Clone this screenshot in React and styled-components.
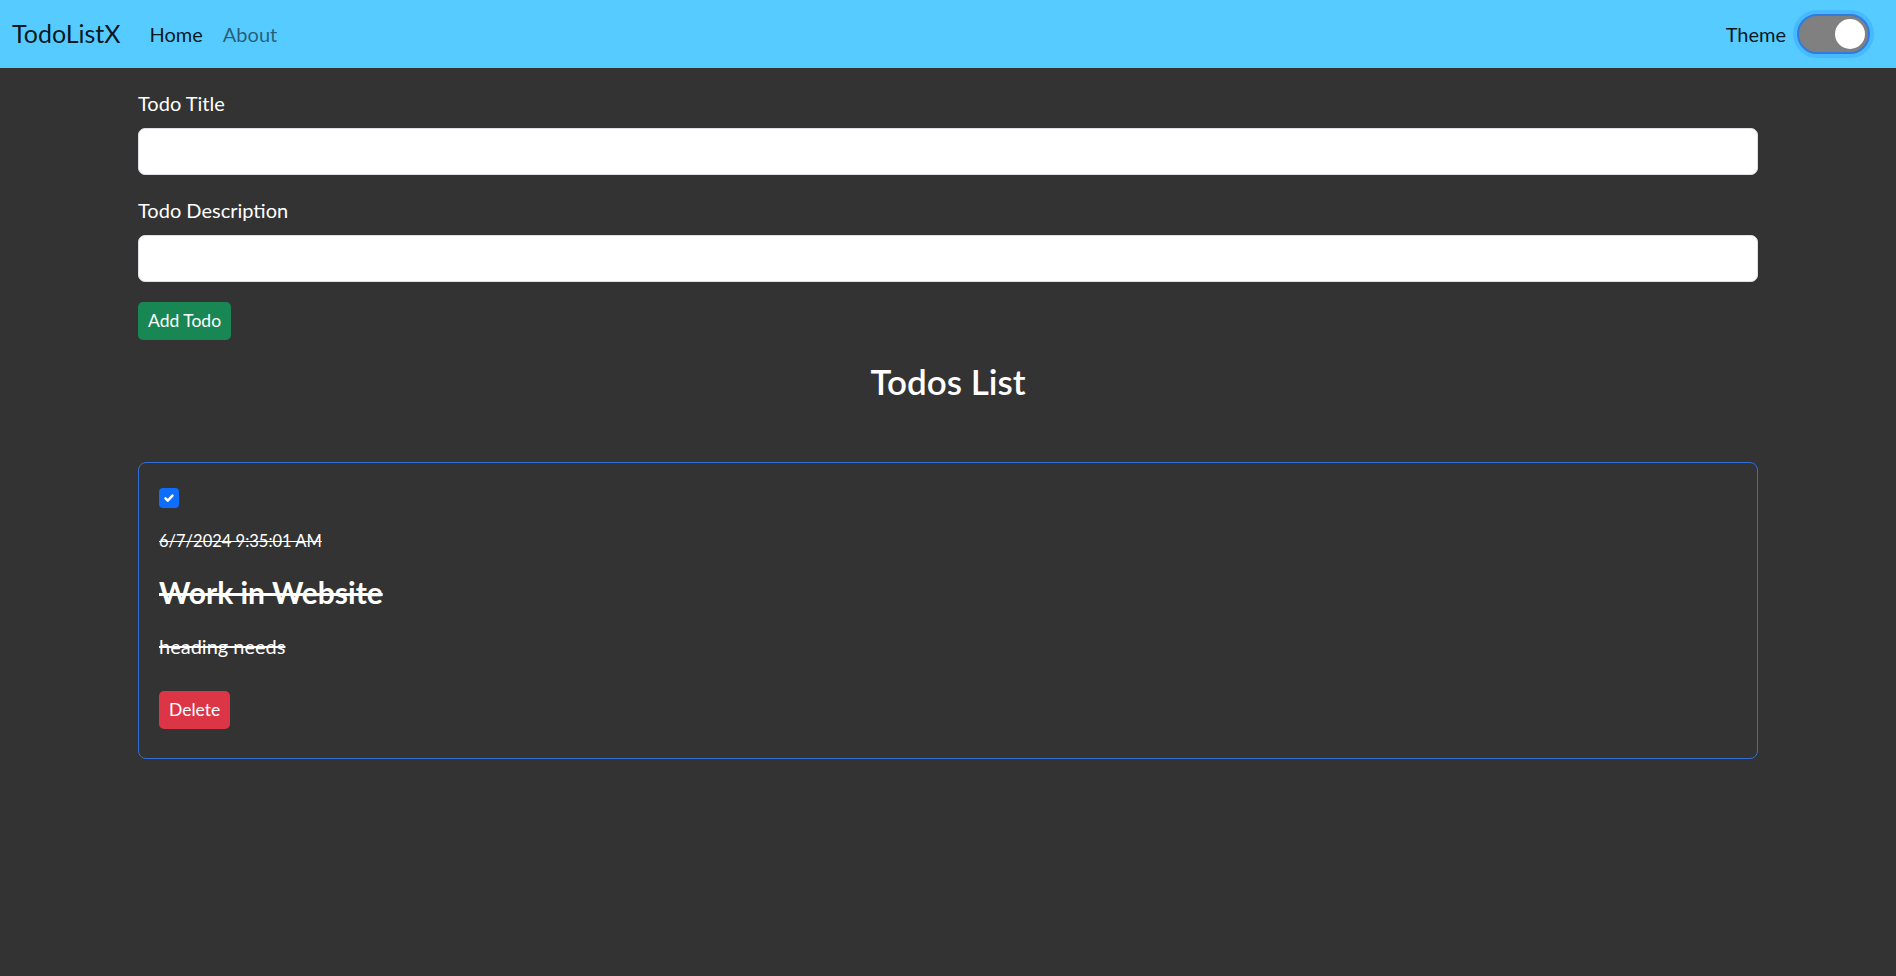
import React from 'react'
import styled, {createGlobalStyle} from 'styled-components'

const GlobalStyle = createGlobalStyle`
  * { box-sizing: border-box; }
  body {
    margin: 0;
    background: #333333;
    font-family: Lato, "Noto Sans", sans-serif;
    font-size: 20px;
    line-height: 1.5;
    color: #fff;
  }
`

const Navbar = styled.nav`
  height: 68px;
  background: #55cbff;
  display: flex;
  align-items: center;
  padding: 0 26px 0 12px;
`

const Brand = styled.a`
  font-size: 25px;
  color: rgba(0, 0, 0, 0.9);
  margin-right: 19px;
  text-decoration: none;
`

const NavLinks = styled.div`
  display: flex;
  flex: 1;
`

const NavLink = styled.a`
  padding: 0 10px;
  font-size: 20px;
  text-decoration: none;
  color: ${props => props.active ? 'rgba(0, 0, 0, 0.9)' : 'rgba(0, 0, 0, 0.55)'};
`

const ThemeToggle = styled.label`
  display: flex;
  align-items: center;
  gap: 11px;
  color: rgba(0, 0, 0, 0.9);
  font-size: 20px;
`

const Switch = styled.span`
  width: 73px;
  height: 40px;
  border-radius: 20px;
  background: #808080;
  border: 2px solid #2f7be0;
  box-shadow: 0 0 0 4px rgba(13, 110, 253, 0.18);
  display: flex;
  align-items: center;
  justify-content: flex-end;
  padding-right: 3px;
  &::after {
    content: '';
    width: 30px;
    height: 30px;
    border-radius: 50%;
    background: #fff;
  }
`

const Container = styled.main`
  width: 1620px;
  margin: 0 auto;
  padding-top: 20px;
`

const Field = styled.div`
  margin-bottom: 20px;
`

const Label = styled.label`
  display: block;
  margin-bottom: 10px;
  font-size: 20px;
  line-height: 30px;
`

const Input = styled.input`
  display: block;
  width: 100%;
  height: 47px;
  border: 1px solid #dee2e6;
  border-radius: 7px;
  background: #fff;
  font: inherit;
  padding: 0 15px;
`

const Button = styled.button`
  display: inline-block;
  font-family: inherit;
  font-size: 17.5px;
  line-height: 1.5;
  color: #fff;
  border: none;
  border-radius: 5px;
  padding: 5px 10px;
  height: 38px;
  background: ${props => props.variant === 'danger' ? '#dc3545' : '#198754'};
`

const Heading = styled.h3`
  text-align: center;
  font-size: 35px;
  font-weight: 600;
  line-height: 42px;
  margin: 20px 0 60px;
`

const Card = styled.div`
  border: 1px solid #2f6fd6;
  border-radius: 8px;
  padding: 20px 20px 29px;
`

const CheckRow = styled.div`
  height: 30px;
  padding-top: 5px;
`

const Checkbox = styled.span`
  display: flex;
  align-items: center;
  justify-content: center;
  width: 20px;
  height: 20px;
  border-radius: 4px;
  background: #0d6efd;
`

const DateText = styled.p`
  margin: 15px 0 0;
  font-size: 16.5px;
  line-height: 26px;
  text-decoration: line-through;
`

const Title = styled.h4`
  margin: 20px 0 0;
  font-size: 30px;
  font-weight: 700;
  line-height: 36px;
  text-decoration: line-through;
`

const Desc = styled.p`
  margin: 21px 0 30px;
  font-size: 20px;
  line-height: 30px;
  text-decoration: line-through;
`

const todos = [
  {date: '6/7/2024 9:35:01 AM', title: 'Work in Website', desc: 'heading needs'}
]

export default function App() {
  return (
    <>
      <GlobalStyle />
      <Navbar>
        <Brand href="#">TodoListX</Brand>
        <NavLinks>
          <NavLink href="#" active>Home</NavLink>
          <NavLink href="#">About</NavLink>
        </NavLinks>
        <ThemeToggle>
          Theme
          <Switch />
        </ThemeToggle>
      </Navbar>
      <Container>
        <Field>
          <Label>Todo Title</Label>
          <Input type="text" />
        </Field>
        <Field>
          <Label>Todo Description</Label>
          <Input type="text" />
        </Field>
        <Button>Add Todo</Button>
        <Heading>Todos List</Heading>
        {todos.map(todo => (
          <Card key={todo.title}>
            <CheckRow>
              <Checkbox>
                <svg width="14" height="14" viewBox="0 0 20 20">
                  <path fill="none" stroke="#fff" strokeWidth="3.5" strokeLinecap="round" strokeLinejoin="round" d="M5 10.5l3.2 3.2L15 6.5" />
                </svg>
              </Checkbox>
            </CheckRow>
            <DateText>{todo.date}</DateText>
            <Title>{todo.title}</Title>
            <Desc>{todo.desc}</Desc>
            <Button variant="danger">Delete</Button>
          </Card>
        ))}
      </Container>
    </>
  )
}
